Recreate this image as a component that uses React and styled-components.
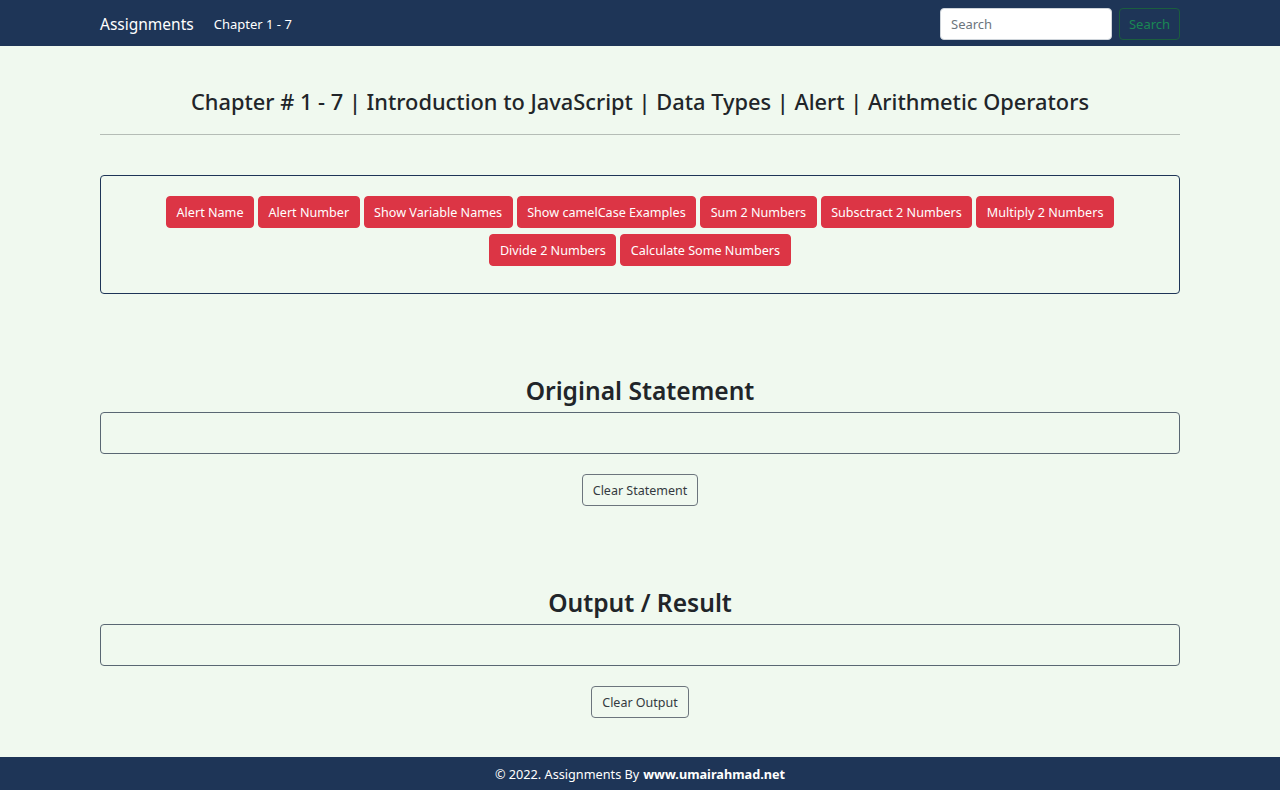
import React from 'react';
import styled, { createGlobalStyle } from 'styled-components';

const GlobalStyle = createGlobalStyle`
    * { box-sizing: border-box; }
    body {
        margin: 0;
        background: #f0f9ef;
        font-family: "Noto Sans", "Open Sans", sans-serif;
        color: #212529;
    }
`;

const Page = styled.div`
    height: 790px;
    display: flex;
    flex-direction: column;
`;

const Navbar = styled.nav`
    height: 46px;
    flex-shrink: 0;
    background: #1e3557;
    display: flex;
    align-items: center;
    justify-content: space-between;
    padding: 1px 100px 0;
`;

const NavLeft = styled.div`
    display: flex;
    align-items: center;
    gap: 20px;
`;

const Brand = styled.span`
    color: #fff;
    font-size: 15.5px;
`;

const NavLink = styled.span`
    color: #fff;
    font-size: 13px;
`;

const SearchForm = styled.form`
    display: flex;
    gap: 7px;
`;

const SearchInput = styled.input`
    width: 172px;
    height: 32px;
    border: 1px solid #ced4da;
    border-radius: 4px;
    padding: 0 10px;
    font-family: inherit;
    font-size: 13px;
    background: #fff;
    &::placeholder { color: #6c757d; }
`;

const SearchButton = styled.button`
    height: 32px;
    width: 61px;
    background: transparent;
    border: 1px solid #1b5e3e;
    border-radius: 4px;
    color: #198754;
    font-family: inherit;
    font-size: 13px;
`;

const Main = styled.main`
    width: 1080px;
    margin: 0 auto;
    flex: 1;
    display: flex;
    flex-direction: column;
    align-items: center;
    padding-top: 40px;
`;

const Title = styled.h1`
    margin: 0;
    font-size: 21.8px;
    font-weight: 500;
    line-height: 32px;
    text-align: center;
`;

const Divider = styled.hr`
    width: 100%;
    margin: 16px 0 40px;
    border: 0;
    border-top: 1px solid #b5bdb6;
`;

const ButtonPanel = styled.div`
    width: 100%;
    border: 1px solid #1e3557;
    border-radius: 4px;
    padding: 20px 20px 27px;
    display: flex;
    flex-wrap: wrap;
    justify-content: center;
    gap: 6px 4px;
`;

const RedButton = styled.button`
    height: 32px;
    padding: 0 9.5px;
    background: #dc3545;
    border: 1px solid #dc3545;
    border-radius: 4px;
    color: #fff;
    font-family: inherit;
    font-size: 12.6px;
`;

const Section = styled.section`
    width: 100%;
    display: flex;
    flex-direction: column;
    align-items: center;
    margin-top: ${({ $top }) => $top}px;
`;

const SectionTitle = styled.h2`
    margin: 0 0 4px;
    font-size: 24.6px;
    font-weight: 600;
    line-height: 34px;
`;

const ResultBox = styled.div`
    width: 100%;
    height: 42px;
    border: 1px solid #5a6773;
    border-radius: 4px;
`;

const OutlineButton = styled.button`
    margin-top: 20px;
    height: 32px;
    padding: 0 10px;
    background: transparent;
    border: 1px solid #6c757d;
    border-radius: 4px;
    color: #343a40;
    font-family: inherit;
    font-size: 12.5px;
`;

const Footer = styled.footer`
    height: 33px;
    flex-shrink: 0;
    background: #1e3557;
    color: #fff;
    font-size: 12.7px;
    display: flex;
    align-items: center;
    justify-content: center;
    gap: 4px;
    b { font-weight: 700; }
`;

const actions = [
    'Alert Name',
    'Alert Number',
    'Show Variable Names',
    'Show camelCase Examples',
    'Sum 2 Numbers',
    'Subsctract 2 Numbers',
    'Multiply 2 Numbers',
    'Divide 2 Numbers',
    'Calculate Some Numbers',
];

const App = () => {
    return (
        <Page>
            <GlobalStyle />
            <Navbar>
                <NavLeft>
                    <Brand>Assignments</Brand>
                    <NavLink>Chapter 1 - 7</NavLink>
                </NavLeft>
                <SearchForm onSubmit={(e) => e.preventDefault()}>
                    <SearchInput placeholder="Search" />
                    <SearchButton>Search</SearchButton>
                </SearchForm>
            </Navbar>

            <Main>
                <Title>Chapter # 1 - 7 | Introduction to JavaScript | Data Types | Alert | Arithmetic Operators</Title>
                <Divider />
                <ButtonPanel>
                    {actions.map((label) => (
                        <RedButton key={label}>{label}</RedButton>
                    ))}
                </ButtonPanel>

                <Section $top={80}>
                    <SectionTitle>Original Statement</SectionTitle>
                    <ResultBox />
                    <OutlineButton>Clear Statement</OutlineButton>
                </Section>

                <Section $top={80}>
                    <SectionTitle>Output / Result</SectionTitle>
                    <ResultBox />
                    <OutlineButton>Clear Output</OutlineButton>
                </Section>
            </Main>

            <Footer>
                © 2022. Assignments By <b>www.umairahmad.net</b>
            </Footer>
        </Page>
    );
};

export default App;
